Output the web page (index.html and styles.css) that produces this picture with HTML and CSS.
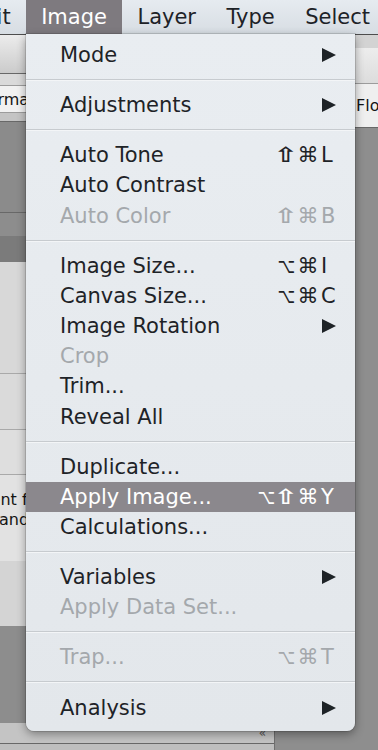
FILE: index.html
```html
<!DOCTYPE html>
<html>
<head>
<meta charset="utf-8">
<link rel="stylesheet" href="styles.css">
</head>
<body>
<div class="app">
  <header class="menubar">
    <span class="mb-item mb-edge">Edit</span>
    <span class="mb-item active">Image</span>
    <span class="mb-item">Layer</span>
    <span class="mb-item">Type</span>
    <span class="mb-item">Select</span>
  </header>

  <div class="workspace">
    <div class="col-left">
      <div class="b tb-left"></div>
      <div class="ln ln-dark"></div>
      <div class="b b11"></div>
      <div class="ln ln-mid"></div>
      <div class="b field-left"><span class="cut-text">Format</span></div>
      <div class="ln ln-mid"></div>
      <div class="b b8"></div>
      <div class="ln ln-dark"></div>
      <div class="b g90"></div>
      <div class="ln ln-dark"></div>
      <div class="b g23"></div>
      <div class="b g26"></div>
      <div class="b l111"></div>
      <div class="ln ln-light"></div>
      <div class="b l55"></div>
      <div class="ln ln-light"></div>
      <div class="b l44"></div>
      <div class="ln ln-light"></div>
      <div class="b l85">
        <span class="para p1">ment for</span>
        <span class="para p2">and</span>
      </div>
      <div class="b l65"></div>
      <div class="b g97"></div>
      <div class="b foot"><span class="chev">«</span></div>
      <div class="ln ln-dark"></div>
      <div class="b foot2"></div>
    </div>
    <div class="col-right">
      <div class="b r13"></div>
      <div class="b tb-right"></div>
      <div class="ln ln-mid"></div>
      <div class="b field-right"><span class="flow-text">Flow</span></div>
      <div class="ln ln-dark"></div>
      <div class="b canvas"></div>
    </div>
  </div>

  <div class="menu">
    <div class="item"><span class="label">Mode</span><svg class="arrow" viewBox="0 0 14 14"><path d="M0 0L14 7L0 14Z"/></svg></div>
    <div class="sep"></div>
    <div class="item"><span class="label">Adjustments</span><svg class="arrow" viewBox="0 0 14 14"><path d="M0 0L14 7L0 14Z"/></svg></div>
    <div class="sep"></div>
    <div class="item"><span class="label">Auto Tone</span><span class="sc"><span class="m"><span class="g shift">⇧</span></span><span class="m cmd"><span class="g">⌘</span></span><span class="k">L</span></span></div>
    <div class="item"><span class="label">Auto Contrast</span></div>
    <div class="item disabled"><span class="label">Auto Color</span><span class="sc"><span class="m"><span class="g shift">⇧</span></span><span class="m cmd"><span class="g">⌘</span></span><span class="k">B</span></span></div>
    <div class="sep"></div>
    <div class="item"><span class="label">Image Size...</span><span class="sc"><span class="m"><span class="g opt">⌥</span></span><span class="m cmd"><span class="g">⌘</span></span><span class="k">I</span></span></div>
    <div class="item"><span class="label">Canvas Size...</span><span class="sc"><span class="m"><span class="g opt">⌥</span></span><span class="m cmd"><span class="g">⌘</span></span><span class="k">C</span></span></div>
    <div class="item"><span class="label">Image Rotation</span><svg class="arrow" viewBox="0 0 14 14"><path d="M0 0L14 7L0 14Z"/></svg></div>
    <div class="item disabled"><span class="label">Crop</span></div>
    <div class="item"><span class="label">Trim...</span></div>
    <div class="item"><span class="label">Reveal All</span></div>
    <div class="sep"></div>
    <div class="item"><span class="label">Duplicate...</span></div>
    <div class="item selected"><span class="label">Apply Image...</span><span class="sc"><span class="m m-narrow"><span class="g opt">⌥</span></span><span class="m"><span class="g shift">⇧</span></span><span class="m cmd"><span class="g">⌘</span></span><span class="k">Y</span></span></div>
    <div class="item"><span class="label">Calculations...</span></div>
    <div class="sep"></div>
    <div class="item"><span class="label">Variables</span><svg class="arrow" viewBox="0 0 14 14"><path d="M0 0L14 7L0 14Z"/></svg></div>
    <div class="item disabled"><span class="label">Apply Data Set...</span></div>
    <div class="sep"></div>
    <div class="item disabled"><span class="label">Trap...</span><span class="sc"><span class="m"><span class="g opt">⌥</span></span><span class="m cmd"><span class="g">⌘</span></span><span class="k">T</span></span></div>
    <div class="sep"></div>
    <div class="item"><span class="label">Analysis</span><svg class="arrow" viewBox="0 0 14 14"><path d="M0 0L14 7L0 14Z"/></svg></div>
  </div>
</div>
</body>
</html>
```

FILE: styles.css
```css
* { box-sizing: border-box; }
html, body {
  margin: 0;
  padding: 0;
  width: 378px;
  height: 750px;
  overflow: hidden;
  background: #8e8e8e;
}
.app {
  position: relative;
  width: 378px;
  height: 750px;
  overflow: hidden;
  font-family: "DejaVu Sans", "Liberation Sans", sans-serif;
}

/* ---------- menu bar ---------- */
.menubar {
  display: flex;
  height: 35px;
  white-space: nowrap;
  background: linear-gradient(#e6ebf0, #d7dde3);
  border-bottom: 1px solid #4d4d4d;
  margin-left: -45.5px;
  width: 440px;
}
.mb-item {
  display: block;
  flex: none;
  height: 34px;
  line-height: 34px;
  padding: 0 15px 0 15.5px;
  font-size: 21px;
  color: #1d2227;
}
.mb-item.active {
  background: #7e7a7f;
  color: #ffffff;
}

/* ---------- background workspace ---------- */
.workspace {
  display: flex;
  height: 715px;
}
.col-left {
  flex: none;
  width: 275px;
  display: flex;
  flex-direction: column;
  border-right: 1px solid #6f6f6f;
  overflow: hidden;
}
.col-right {
  flex: 1;
  min-width: 0;
  display: flex;
  flex-direction: column;
  overflow: hidden;
}
.b { flex: none; }
.ln { height: 1px; flex: none; }
.ln-dark { background: #686868; }
.ln-mid { background: #9c9c9c; }
.ln-light { background: #a9a9a9; }

.tb-left { height: 38px; background: linear-gradient(#ececec, #cbcbcb); }
.b11 { height: 11px; background: #dadada; }
.field-left {
  height: 26px;
  background: #f1f1f1;
  display: flex;
  align-items: center;
  overflow: hidden;
}
.cut-text {
  font-size: 16px;
  color: #151515;
  margin-left: -21px;
  white-space: nowrap;
}
.b8 { height: 8px; background: #c4c4c4; }
.g90 { height: 90px; background: #8b8b8b; }
.g23 { height: 23px; background: #8d8d8d; }
.g26 { height: 26px; background: #7b7b7b; }
.l111 { height: 111px; background: #d8d8d8; }
.l55 { height: 55px; background: #dadada; }
.l44 { height: 44px; background: #dedede; }
.l85 {
  height: 86px;
  background: #e2e2e2;
  display: flex;
  flex-direction: column;
  padding-top: 15px;
  overflow: hidden;
}
.para {
  display: block;
  font-size: 16px;
  line-height: 20px;
  color: #151515;
  white-space: nowrap;
}
.p1 { margin-left: -25px; }
.p2 { margin-left: -1px; }
.l65 { height: 65px; background: #d4d4d4; }
.g97 { height: 97px; background: #8d8d8d; }
.foot {
  height: 20px;
  background: #c4c4c4;
  display: flex;
  justify-content: flex-end;
  align-items: center;
  padding-right: 8px;
}
.chev { font-size: 12px; color: #555; line-height: 1; }
.foot2 { height: 7px; background: #bebebe; }

.r13 { height: 13px; background: #d3d3d3; }
.tb-right { height: 35px; background: linear-gradient(#ededed, #dcdcdc); }
.field-right {
  height: 43px;
  background: #efefef;
  display: flex;
  align-items: center;
  padding-left: 81px;
}
.flow-text { font-size: 16px; color: #151515; white-space: nowrap; }
.canvas { flex: 1; background: #8e8e8e; }

/* ---------- dropdown menu ---------- */
.menu {
  position: absolute;
  top: 34px;
  left: 26px;
  width: 329px;
  padding: 6px 0 8px;
  background: linear-gradient(#e9edf1, #e3e7eb);
  border-radius: 0 0 8px 8px;
  box-shadow: 0 3px 10px rgba(0, 0, 0, 0.38), 0 0 0 1px rgba(0, 0, 0, 0.12);
}
.item {
  display: flex;
  align-items: center;
  height: 30.2px;
  padding: 0 18px 0 34px;
  font-size: 21px;
  color: #1e2327;
  white-space: nowrap;
}
.label { flex: 1; }
.item.disabled { color: #a4a8ac; }
.item.selected {
  background: #8b888d;
  color: #ffffff;
}
.arrow {
  width: 14px;
  height: 14px;
  margin-right: 1px;
  fill: #1e2327;
}
.sc {
  display: flex;
  align-items: center;
}
.m {
  display: flex;
  justify-content: center;
  width: 22px;
}
.m-narrow { width: 17px; }
.m.cmd { width: 22px; }
.g { display: inline-block; }
.g.shift { transform: scaleX(1.35); font-weight: bold; }
.g.opt { transform: scaleX(0.72); }
.k {
  display: block;
  width: 18px;
  padding-left: 2px;
}
.sep {
  height: 19.9px;
  display: flex;
  flex-direction: column;
  justify-content: center;
}
.sep::before {
  content: "";
  display: block;
  height: 1px;
  background: #c7cbcf;
}
.sep::after {
  content: "";
  display: block;
  height: 1px;
  background: #f3f5f7;
}
```
